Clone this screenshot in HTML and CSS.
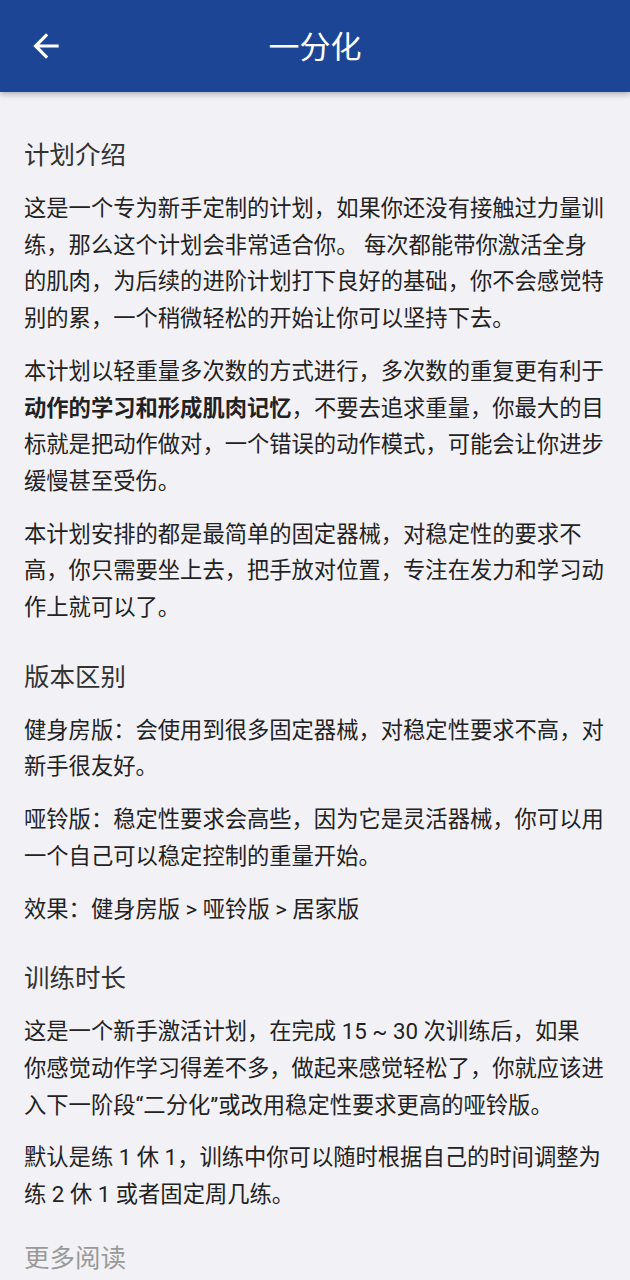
FILE: index.html
```html
<!DOCTYPE html>
<html lang="zh-CN">
<head>
    <meta charset="UTF-8">
    <meta name="viewport" content="width=device-width, initial-scale=1.0">
    <title>一分化</title>
    <link rel="stylesheet" href="styles.css">
</head>
<body>
    <header class="toolbar">
        <div class="toolbar-left">
            <svg class="back-icon" viewBox="0 0 24 24" width="38" height="38">
                <path d="M20 11H7.83l5.59-5.59L12 4l-8 8 8 8 1.41-1.41L7.83 13H20v-2z" fill="#fff"/>
            </svg>
        </div>
        <h1 class="toolbar-title">一分化</h1>
        <div></div>
    </header>

    <main class="content">
        <h2>计划介绍</h2>
        <p>这是一个专为新手定制的计划，如果你还没有接触过力量训练，那么这个计划会非常适合你。 每次都能带你激活全身的肌肉，为后续的进阶计划打下良好的基础，你不会感觉特别的累，一个稍微轻松的开始让你可以坚持下去。</p>
        <p>本计划以轻重量多次数的方式进行，多次数的重复更有利于<strong>动作的学习和形成肌肉记忆</strong>，不要去追求重量，你最大的目标就是把动作做对，一个错误的动作模式，可能会让你进步缓慢甚至受伤。</p>
        <p>本计划安排的都是最简单的固定器械，对稳定性的要求不高，你只需要坐上去，把手放对位置，专注在发力和学习动作上就可以了。</p>

        <h2>版本区别</h2>
        <p>健身房版：会使用到很多固定器械，对稳定性要求不高，对新手很友好。</p>
        <p>哑铃版：稳定性要求会高些，因为它是灵活器械，你可以用一个自己可以稳定控制的重量开始。</p>
        <p>效果：健身房版 &gt; 哑铃版 &gt; 居家版</p>

        <h2>训练时长</h2>
        <p>这是一个新手激活计划，在完成 15 ~ 30 次训练后，如果<br>你感觉动作学习得差不多，做起来感觉轻松了，你就应该进入下一阶段“二分化”或改用稳定性要求更高的哑铃版。</p>
        <p>默认是练 1 休 1，训练中你可以随时根据自己的时间调整为练 2 休 1 或者固定周几练。</p>

        <h2 class="more">更多阅读</h2>
    </main>
</body>
</html>
```

FILE: styles.css
```css
body {
    margin: 0;
    background-color: #f2f1f6;
    font-family: Roboto, "Noto Sans CJK SC", sans-serif;
    color: #222;
}

/* pasek narzędzi */
.toolbar {
    display: grid;
    grid-template-columns: 1fr auto 1fr;
    align-items: center;
    height: 92px;
    background-color: #1c4595;
    box-shadow: 0 2px 6px rgba(0, 0, 0, 0.3);
}

.toolbar-left {
    display: flex;
    align-items: center;
    padding-left: 27px;
}

.back-icon {
    display: block;
}

.toolbar-title {
    margin: 3px 0 0 0;
    color: #fff;
    font-size: 31px;
    font-weight: normal;
    line-height: 36px;
}

/* treść */
.content {
    padding: 45px 24px 0 24px;
}

h2 {
    margin: 33px 0 17px 0;
    font-size: 25.5px;
    font-weight: normal;
    line-height: 36px;
    color: #333;
}

h2:first-child {
    margin-top: 0;
}

p {
    margin: 0 0 16px 0;
    font-size: 22.3px;
    line-height: 36.7px;
}

strong {
    font-weight: bold;
}

.more {
    margin-top: 27px;
    color: #9a9a9a;
}
```
